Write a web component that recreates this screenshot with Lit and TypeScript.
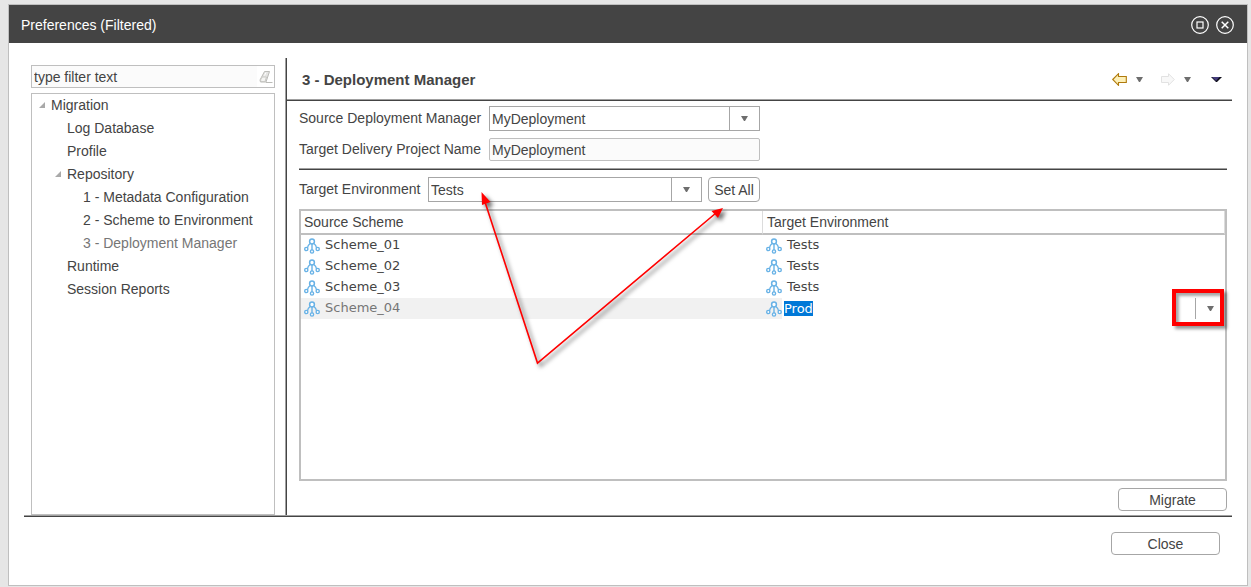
import { LitElement, html, svg, css } from "lit";
import { customElement, property } from "lit/decorators.js";

interface TreeNode {
  label: string;
  selected?: boolean;
  children?: TreeNode[];
}

const TREE: TreeNode[] = [
  {
    label: "Migration",
    children: [
      { label: "Log Database" },
      { label: "Profile" },
      {
        label: "Repository",
        children: [
          { label: "1 - Metadata Configuration" },
          { label: "2 - Scheme to Environment" },
          { label: "3 - Deployment Manager", selected: true },
        ],
      },
      { label: "Runtime" },
      { label: "Session Reports" },
    ],
  },
];

const SCHEMES = [
  { source: "Scheme_01", target: "Tests" },
  { source: "Scheme_02", target: "Tests" },
  { source: "Scheme_03", target: "Tests" },
  { source: "Scheme_04", target: "Prod", editing: true },
];

const caret = html`<svg width="7" height="5" viewBox="0 0 7 5" aria-hidden="true">
  <path d="M0 0H7L4 5H3Z" fill="#6e6e6e" />
</svg>`;

const nodesIcon = html`<svg class="nodes" width="16" height="16" viewBox="0 0 16 16" fill="none" stroke="#68b2e6" aria-hidden="true">
  <path d="M8 6V12M6.4 5.2C4.4 6.6 3.6 8 3.4 10M9.6 5.2C11.6 6.600 12.4 8 12.6 10" stroke-width="1.4" />
  <circle cx="8" cy="3.500" r="2.400" stroke-width="1.5" fill="#fff" />
  <circle cx="2.300" cy="11" r="1.600" stroke-width="1.400" fill="#fff" />
  <circle cx="8" cy="13.500" r="1.600" stroke-width="1.400" fill="#fff" />
  <circle cx="13.700" cy="11" r="1.600" stroke-width="1.400" fill="#fff" />
</svg>`;

@customElement("combo-box")
export class ComboBox extends LitElement {
  @property() value = "";
  @property() label = "";

  static styles = css`
    :host { display: flex; min-width: 0; }
    .box {
      flex: 1; min-width: 0; display: grid; grid-template-columns: 1fr 30px;
      height: 25px; box-sizing: border-box; border: 1px solid #a6a6a6; background: #fff;
    }
    .select {
      grid-area: 1 / 1 / 2 / 3; appearance: none; border: 0; background: transparent;
      padding: 0 33px 0 2px; margin: 0; min-width: 0; outline: 0;
      font: 14px/20px "Liberation Sans", Arial, sans-serif; color: #444;
    }
    .arrow {
      grid-area: 1 / 2 / 2 / 3; border-left: 1px solid #a6a6a6; pointer-events: none;
      display: flex; align-items: center; justify-content: center;
    }
  `;

  render() {
    return html`<div class="box">
      <select class="select" aria-label=${this.label}>
        <option selected>${this.value}</option>
      </select>
      <span class="arrow">${caret}</span>
    </div>`;
  }
}

@customElement("app-root")
export class AppRoot extends LitElement {
  static styles = css`
    :host {
      display: flex; box-sizing: border-box; min-height: 100vh;
      padding: 4px 3px 1px 8px; background: #e6e6e6; color: #444;
      font: 14px/20px "Liberation Sans", Arial, sans-serif;
    }
    input, button { font: inherit; color: inherit; margin: 0; }
    .window {
      flex: 1; min-width: 0; display: flex; flex-direction: column;
      border: 1px solid #bfbfbf; background: #fff;
    }
    .titlebar {
      display: flex; align-items: center; justify-content: space-between; box-sizing: border-box;
      height: 38px; padding: 2px 13px 0 12px; background: #444; color: #fff;
    }
    .title { font: inherit; margin: 0; }
    .controls { display: flex; gap: 7px; }
    .icon-button { display: flex; border: 0; padding: 0; background: none; }
    .body { flex: 1; display: flex; padding: 15px 15px 0; }
    .sidebar {
      width: 261px; flex: none; box-sizing: border-box; padding: 7px 10px 0 7px;
      display: flex; flex-direction: column; gap: 5px;
    }
    .filter {
      display: flex; align-items: center; height: 23px; box-sizing: border-box;
      border: 1px solid #bfbfbf; padding-right: 1px;
    }
    .filter-input {
      flex: 1; min-width: 0; border: 0; outline: 0; padding: 0 2px;
      background: #fbfbfb; height: 21px; box-sizing: border-box;
    }
    .tree { flex: 1; border: 1px solid #bfbfbf; }
    .list { list-style: none; margin: 0; padding: 0 0 0 16px; }
    .tree > .list { padding: 0 0 0 3px; }
    .item { display: flex; align-items: center; height: 23px; padding-bottom: 2px; box-sizing: border-box; }
    .twist { width: 16px; display: flex; justify-content: center; padding: 1px 3px 0 0; box-sizing: border-box; }
    .selected { color: #767676; }
    .panel {
      position: relative; flex: 1; min-width: 0; display: flex; flex-direction: column;
      border-left: 1px solid #a0a0a0;
    }
    .panel-inner {
      flex: 1; display: flex; flex-direction: column; border-left: 1px solid #444;
    }
    .panel-head {
      display: flex; align-items: center; justify-content: space-between;
      height: 41px; padding: 2px 10px 0 15px; box-sizing: border-box;
    }
    .heading { font-size: 15px; line-height: 20px; font-weight: bold; margin: 0; }
    .tools { display: flex; align-items: center; }
    .history { display: flex; align-items: center; gap: 9px; margin-right: 17px; }
    .history.last { margin-right: 20px; }
    .rule { flex: none; height: 1px; margin: 0; border: 0; border-top: 1px solid #a0a0a0; background: #444; }
    .form {
      flex: 1; display: flex; flex-direction: column; gap: 7px; padding: 5px 5px 4px 12px;
    }
    .row { display: flex; align-items: center; gap: 6px; max-width: 461px; }
    .label { padding-bottom: 2px; min-width: 123px; }
    .label.wide { min-width: 184px; }
    .grow { flex: 1; min-width: 0; }
    .readonly {
      height: 23px; box-sizing: border-box; border: 1px solid #bfbfbf; border-radius: 2px;
      background: #fbfbfb; padding: 0 2px; outline: 0;
    }
    .button {
      border: 1px solid #a6a6a6; border-radius: 4px; background: #fff;
      height: 23px; width: 109px; box-sizing: border-box; padding: 0;
    }
    .button.small { width: 52px; height: 25px; }
    .button.end { align-self: flex-end; }
    .table-box { flex: 1; border: 2px solid #bfbfbf; }
    .table { width: 100%; border-collapse: separate; border-spacing: 0; table-layout: fixed; }
    .table th {
      height: 22px; padding: 0 0 0 3px; box-sizing: content-box; text-align: left; font-weight: normal;
      border-bottom: 2px solid #bfbfbf; border-right: 1px solid #dcdcdc;
    }
    .table td {
      height: 21px; padding: 0 0 0 3px;
      font: 13px/20px "DejaVu Sans", Verdana, sans-serif;
    }
    .table th:last-child { padding-left: 4px; }
    .cell { display: flex; align-items: center; gap: 5px; height: 21px; }
    .name { padding-bottom: 2px; }
    .nodes { flex: none; align-self: flex-end; margin-bottom: 2px; }
    .active td { color: #767676; background: #f1f1f1; }
    .active .editing { background: #fff linear-gradient(#f1f1f1, #f1f1f1) no-repeat 0 0 / 19px 100%; }
    .editing .cell { gap: 2px; }
    .editor {
      field-sizing: content; border: 0; padding: 0; outline: 0; height: 15px;
      line-height: 15px; background: #0078d7; color: #fff;
    }
    .drop {
      position: relative; margin-left: auto; width: 30px; height: 21px;
      border: 0; border-left: 1px solid #a6a6a6; background: #fff; padding: 0;
      display: flex; align-items: center; justify-content: center;
    }
    .mark {
      position: absolute; inset: -9px 1px -7px -24px; border: 4px solid #f00;
      box-shadow: 3px 3px 3px rgba(0, 0, 0, 0.4), inset 3px 3px 3px rgba(0, 0, 0, 0.35);
      pointer-events: none;
    }
    .arrows {
      position: absolute; left: 184px; top: 122px; overflow: visible; pointer-events: none;
      filter: drop-shadow(3px 3px 2px rgba(0, 0, 0, 0.6));
    }
    .footer-rule { margin: 0 15px; }
    .footer { display: flex; justify-content: flex-end; padding: 15px 27px 30px; }
  `;

  private renderNodes(nodes: TreeNode[]): unknown {
    return html`<ul class="list">
      ${nodes.map(
        (node) => html`<li>
          <div class="item ${node.selected ? "selected" : ""}">
            <span class="twist">
              ${node.children
                ? html`<svg width="6" height="6" viewBox="0 0 6 6" aria-hidden="true">
                    <path d="M6 0V6H0Z" fill="#a9a9a9" />
                  </svg>`
                : ""}
            </span>
            <span>${node.label}</span>
          </div>
          ${node.children ? this.renderNodes(node.children) : ""}
        </li>`
      )}
    </ul>`;
  }

  private windowGlyph(shape: unknown) {
    return html`<svg width="18" height="18" viewBox="0 0 18 18" fill="none" stroke="#fff" aria-hidden="true">
      <circle cx="9" cy="9" r="8.3" stroke-width="1.2" />
      ${shape}
    </svg>`;
  }

  render() {
    return html`
      <div class="window">
        <header class="titlebar">
          <h1 class="title">Preferences (Filtered)</h1>
          <div class="controls">
            <button class="icon-button" aria-label="Maximize">
              ${this.windowGlyph(svg`<rect x="6" y="6" width="6" height="6" stroke-width="1.2" />`)}
            </button>
            <button class="icon-button" aria-label="Close window">
              ${this.windowGlyph(svg`<path d="M5.7 5.7L12.3 12.3M12.3 5.7L5.7 12.3" stroke-width="1.5" />`)}
            </button>
          </div>
        </header>

        <div class="body">
          <nav class="sidebar">
            <div class="filter">
              <input class="filter-input" aria-label="Filter" value="type filter text" />
              <button class="icon-button" aria-label="Clear filter">
                <svg width="16" height="16" viewBox="0 0 16 16" aria-hidden="true">
                  <path d="M7.5 2.5H12.5L9 13H3.5L3 11Z" fill="#e4e4e2" stroke="#bcbcb8" stroke-linejoin="round" />
                  <path d="M3.5 11L5 8H9.5L8 12.5H4Z" fill="#f4f4f2" stroke="#c8c8c4" />
                  <path d="M7.5 6.5L9 3.5" stroke="#fff" />
                  <path d="M9 13.5H15.5" stroke="#bcbcb8" />
                </svg>
              </button>
            </div>
            <div class="tree">${this.renderNodes(TREE)}</div>
          </nav>

          <main class="panel">
            <div class="panel-inner">
              <div class="panel-head">
                <h2 class="heading">3 - Deployment Manager</h2>
                <div class="tools">
                  <div class="history">
                    <button class="icon-button" aria-label="Back">
                      <svg width="15" height="13" viewBox="0 0 15 13" aria-hidden="true">
                        <path d="M0.7 6.5L6.5 0.7V3.5H14.300V9.5H6.5V12.3Z" fill="#fdf0b8" stroke="#b07a0c" stroke-width="1.1" />
                      </svg>
                    </button>
                    <button class="icon-button" aria-label="Back history">${caret}</button>
                  </div>
                  <div class="history last">
                    <button class="icon-button" aria-label="Forward">
                      <svg width="15" height="13" viewBox="0 0 15 13" aria-hidden="true">
                        <path d="M14.3 6.5L8.5 0.7V3.5H1.5V9.5H8.5V12.3Z" fill="#f8f8f8" stroke="#e2e2e2" />
                      </svg>
                    </button>
                    <button class="icon-button" aria-label="Forward history">${caret}</button>
                  </div>
                  <button class="icon-button" aria-label="View menu">
                    <svg width="11" height="5" viewBox="0 0 11 5" aria-hidden="true">
                      <path d="M0 0H11L6 5H5Z" fill="#0c0c18" />
                      <path d="M1 0H8.5L5 4Z" fill="#443c7c" />
                    </svg>
                  </button>
                </div>
              </div>
              <hr class="rule" />

              <div class="form">
                <div class="row">
                  <span class="label wide">Source Deployment Manager</span>
                  <combo-box class="grow" label="Source Deployment Manager" value="MyDeployment"></combo-box>
                </div>
                <div class="row">
                  <label class="label wide" for="project">Target Delivery Project Name</label>
                  <input id="project" class="readonly grow" readonly value="MyDeployment" />
                </div>
                <hr class="rule" />
                <div class="row">
                  <span class="label">Target Environment</span>
                  <combo-box class="grow" label="Target Environment" value="Tests"></combo-box>
                  <button class="button small">Set All</button>
                </div>
                <div class="table-box">
                  <table class="table">
                    <thead>
                      <tr><th>Source Scheme</th><th>Target Environment</th></tr>
                    </thead>
                    <tbody>
                      ${SCHEMES.map(
                        (row) => html`<tr class=${row.editing ? "active" : ""}>
                          <td><div class="cell">${nodesIcon}<span class="name">${row.source}</span></div></td>
                          <td class=${row.editing ? "editing" : ""}>
                            <div class="cell">
                              ${nodesIcon}
                              ${row.editing
                                ? html`<input class="editor" aria-label="Target Environment" value=${row.target} />
                                    <button class="drop" aria-label="Choose environment">
                                      ${caret}<span class="mark"></span>
                                    </button>`
                                : html`<span class="name">${row.target}</span>`}
                            </div>
                          </td>
                        </tr>`
                      )}
                    </tbody>
                  </table>
                </div>
                <button class="button end">Migrate</button>
              </div>
            </div>

            <svg class="arrows" width="270" height="190" viewBox="470 180 270 190" aria-hidden="true">
              <path d="M485 202L537.5 363L716 213" fill="none" stroke="#f00" stroke-width="1.6" />
              <path d="M481.5 192L490.5 202L482 205Z" fill="#f00" />
              <path d="M723 208L718 218L711.5 211Z" fill="#f00" />
            </svg>
          </main>
        </div>
        <hr class="rule footer-rule" />
        <footer class="footer"><button class="button">Close</button></footer>
      </div>
    `;
  }
}
